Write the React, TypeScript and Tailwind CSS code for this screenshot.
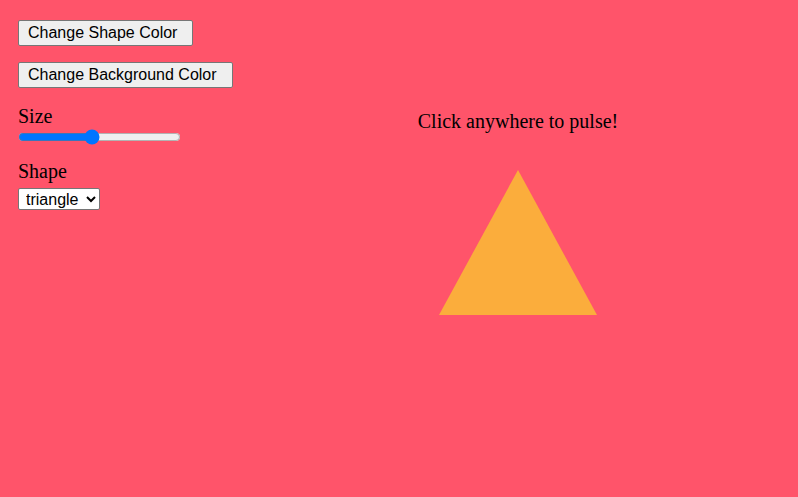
import { useState } from 'react'

const btn =
    'h-[26px] px-[9px] text-left bg-[#efefef] border border-[#767676] rounded-[2px] text-[16px] leading-none text-black font-["Liberation_Sans",Arial,sans-serif]'

export default function App() {
    const [size, setSize] = useState(45)
    const [shape, setShape] = useState('triangle')

    return (
        <div className="flex min-h-screen bg-[#ff546a] font-['Liberation_Serif','Times_New_Roman',serif] text-black">
            <div className="flex w-[238px] shrink-0 flex-col items-start pl-[18px] pt-[20px]">
                <button className={btn + ' w-[175px]'}>Change Shape Color</button>
                <button className={btn + ' mt-[16px] w-[215px]'}>Change Background Color</button>
                <label className="mt-[17px] text-[20px] leading-[23px]">Size</label>
                <input
                    type="range"
                    min={0}
                    max={100}
                    value={size}
                    onChange={e => setSize(Number(e.target.value))}
                    className="mt-[1px] h-[16px] w-[163px] accent-[#0075ff]"
                />
                <label className="mt-[15px] text-[20px] leading-[23px]">Shape</label>
                <select
                    value={shape}
                    onChange={e => setShape(e.target.value)}
                    className="mt-[5px] h-[22px] w-[82px] rounded-[2px] border border-[#767676] bg-white pl-[3px] text-[16px] font-['Liberation_Sans',Arial,sans-serif]"
                >
                    <option value="circle">circle</option>
                    <option value="square">square</option>
                    <option value="triangle">triangle</option>
                </select>
            </div>
            <div className="flex flex-1 flex-col items-center pt-[110px]">
                <p className="text-[20px] leading-[23px]">Click anywhere to pulse!</p>
                <div className="mt-[37px] h-0 w-0 border-b-[145px] border-l-[79px] border-r-[79px] border-b-[#fbad3c] border-l-transparent border-r-transparent" />
            </div>
        </div>
    )
}
